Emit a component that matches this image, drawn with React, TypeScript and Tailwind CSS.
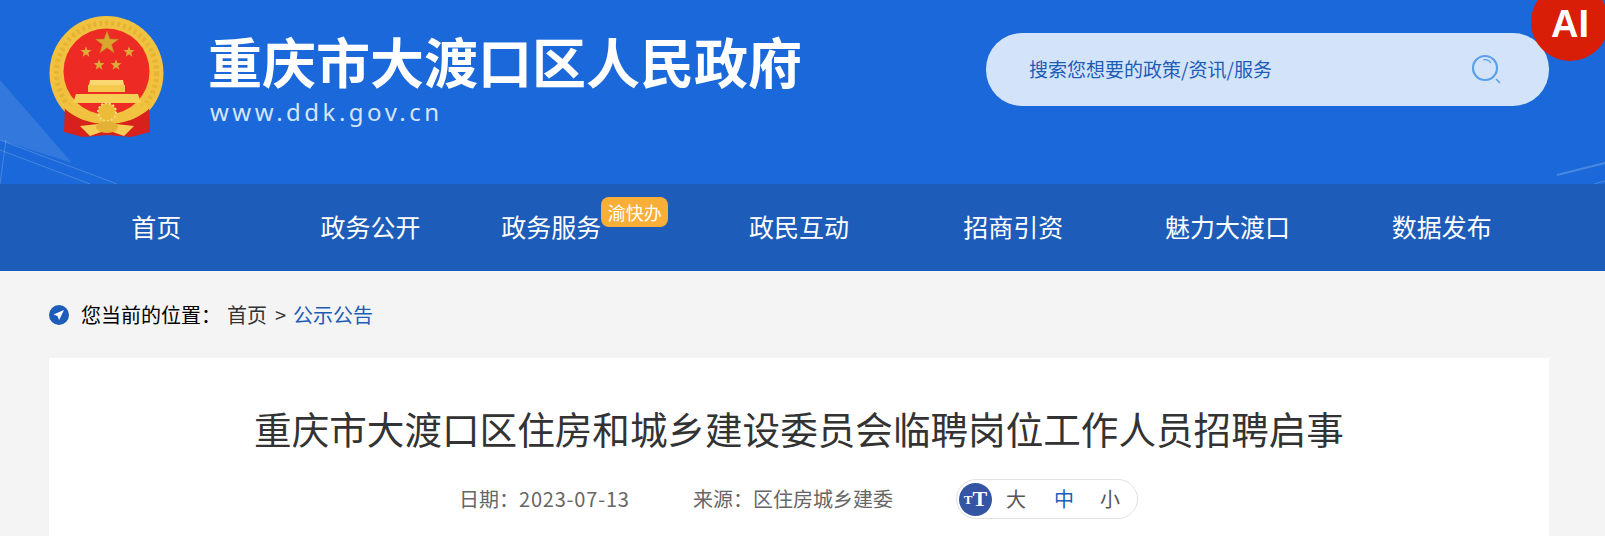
import React from 'react';

const navItems = ['首页', '政务公开', '政务服务', '政民互动', '招商引资', '魅力大渡口', '数据发布'];
const COLON = '\uFF1A';

const starPoints = (cx: number, cy: number, r: number) => {
  const pts: string[] = [];
  for (let i = 0; i < 10; i++) {
    const rad = i % 2 === 0 ? r : r * 0.4;
    const a = (Math.PI / 5) * i - Math.PI / 2;
    pts.push(`${(cx + rad * Math.cos(a)).toFixed(2)},${(cy + rad * Math.sin(a)).toFixed(2)}`);
  }
  return pts.join(' ');
};

const Emblem: React.FC = () => (
  <svg width="116" height="122" viewBox="0 0 116 122" className="shrink-0">
    <circle cx="57.5" cy="57" r="57" fill="#f0c23f" />
    <circle cx="57.5" cy="57" r="50" fill="none" stroke="#dba42a" strokeWidth="5" strokeDasharray="3 3" opacity="0.5" />
    <circle cx="57.5" cy="55.5" r="43" fill="#ee2a24" />
    <polygon points={starPoints(58, 27, 12)} fill="#d9a62e" stroke="#b98a22" strokeWidth="0.5" />
    <polygon points={starPoints(37, 36, 5.8)} fill="#dcae38" />
    <polygon points={starPoints(80, 36, 5.8)} fill="#dcae38" />
    <polygon points={starPoints(50, 49, 5.8)} fill="#dcae38" />
    <polygon points={starPoints(67, 49, 5.8)} fill="#dcae38" />
    <path d="M41 64h33l1 5h-35z" fill="#f9d872" />
    <path d="M39 69h37v7h-37z" fill="#f5c94e" />
    <path d="M27 78h62l3 9h-68z" fill="#f6cf55" />
    {/* ribbon drapes and band behind the wreath foot */}
    <path d="M16 88l16 15 52 0 16-15 1 28-19 5-24-2-24 2-19-5z" fill="#d8211c" />
    <path d="M18 86c10 9 24 14 40 14s30-5 40-14l4 5c-11 11-27 17-44 17s-33-6-44-17z" fill="#f0c23f" />
    <circle cx="58" cy="96" r="9" fill="#ecbb38" />
    <circle cx="58" cy="96" r="9" fill="none" stroke="#f8dc80" strokeWidth="2" strokeDasharray="2 2" />
    <path d="M31 110l27-3 27 3-10 10-17-6-17 6z" fill="#f3cd55" />
    <ellipse cx="58" cy="111" rx="11" ry="6" fill="#e2b136" />
  </svg>
);

export default function App() {
  return (
    <div className="relative h-[536px] overflow-hidden bg-[#f4f4f4] font-['Noto_Sans_CJK_SC',sans-serif]">
      <header className="relative h-[184px] bg-[#1a68d9]">
        {/* faint streaks in the banner */}
        <svg className="absolute inset-0 h-full w-full" viewBox="0 0 1605 184">
          <path d="M0 80L72 163L0 140Z" fill="#ffffff" opacity="0.11" />
          <path d="M0 140L117 184M0 150L90 184M6 140L0 184" stroke="#ffffff" strokeWidth="1" fill="none" opacity="0.2" />
          <path d="M1557 175L1605 163" stroke="#ffffff" strokeWidth="2" opacity="0.2" />
          <path d="M1594 184L1605 181" stroke="#ffffff" strokeWidth="1" opacity="0.2" />
        </svg>
        <div className="relative ml-[49px] flex w-[1500px] items-start">
          <div className="mt-4">
            <Emblem />
          </div>
          <div className="ml-[43px] mt-[24px] w-[640px]">
            <div className="whitespace-nowrap text-[54px] leading-[74px] font-bold text-white">重庆市大渡口区人民政府</div>
            <div className="pl-[2px] text-[24px] leading-[28px] tracking-[3.5px] text-[#d5e5fa] font-['Noto_Sans',sans-serif]">www.ddk.gov.cn</div>
          </div>
          <div className="ml-[138px] mt-[33px] flex h-[73px] flex-1 items-center justify-between rounded-[36px] bg-[#d3e4fa] pl-[43px] pr-[46px]">
            <span className="text-[19px] text-[#1d5cb8]">搜索您想要的政策/资讯/服务</span>
            <svg width="32" height="32" viewBox="0 0 32 32" fill="none" stroke="#5a9fe8">
              <circle cx="14" cy="14" r="12" strokeWidth="2.2" />
              <path d="M25 25l4 4" strokeWidth="1.6" />
              <path d="M12 6c3-1 6 0 8 3" strokeWidth="1.2" />
            </svg>
          </div>
        </div>
      </header>

      <nav className="h-[87px] bg-[#1d5cb8]">
        <ul className="ml-[49px] grid h-full w-[1500px] grid-cols-7 pb-[2px]">
          {navItems.map(item => (
            <li key={item} className="flex items-center justify-center text-[25px] text-white">
              <span>{item}</span>
              {item === '政务服务' && (
                <span className="mt-[13px] flex h-[30px] w-[67px] items-center justify-center self-start rounded-[8px] bg-[#f9ae37] text-[18px]">
                  渝快办
                </span>
              )}
            </li>
          ))}
        </ul>
      </nav>

      <main className="ml-[49px] w-[1500px]">
        <div className="flex h-[87px] items-center text-[20px]">
          <svg width="20" height="20" viewBox="0 0 20 20" className="mr-3 shrink-0">
            <circle cx="10" cy="10" r="10" fill="#1d5cb8" />
            <path d="M15 5L4.5 9.5l4 1.6 1.6 4z" fill="#ffffff" />
          </svg>
          <span className="w-[146px] text-black">您当前的位置{COLON}</span>
          <span className="text-[#333333]">首页</span>
          <span className="ml-2 w-[18px] text-[#333333]">&gt;</span>
          <span className="text-[#1d5cb8]">公示公告</span>
        </div>

        <article className="h-[200px] bg-white pt-[40px]">
          <h1 className="text-center text-[37.6px] leading-[60px] text-[#333333]">重庆市大渡口区住房和城乡建设委员会临聘岗位工作人员招聘启事</h1>
          <div className="mt-[21px] flex items-center pl-[410px] text-[20px] text-[#666666]">
            <span className="w-[234px]">日期{COLON}<span className="tracking-[0.8px]">2023-07-13</span></span>
            <span className="w-[263px]">来源{COLON}区住房城乡建委</span>
            <div className="flex h-[40px] w-[182px] items-center rounded-[20px] border border-[#e2e2e2] pl-[2px]">
              <span className="flex h-[33px] w-[33px] items-center justify-center rounded-full bg-[#3455a4] font-['Liberation_Serif',serif] font-bold leading-none text-white">
                <span className="text-[13px]">T</span>
                <span className="text-[22px]">T</span>
              </span>
              <span className="ml-[14px] text-[#555555]">大</span>
              <span className="ml-[28px] text-[#1d5cb8]">中</span>
              <span className="ml-[26px] text-[#555555]">小</span>
            </div>
          </div>
        </article>
      </main>

      <div className="absolute left-[1531px] top-[-17px] flex h-[78px] w-[78px] items-center justify-center rounded-full bg-[#d81e06] pt-[4px] text-[38px] font-bold text-white font-['Liberation_Sans',sans-serif]">
        AI
      </div>
    </div>
  );
}
